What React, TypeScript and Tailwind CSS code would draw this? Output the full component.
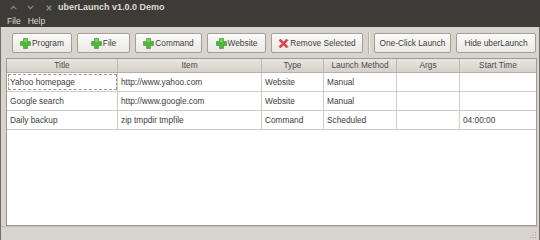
import React from 'react';

const FONT = "font-['Liberation_Sans',Arial,sans-serif]";

const PlusIcon: React.FC = () => (
	<svg width="11" height="11" viewBox="0 0 11 11" className="shrink-0">
		<path d="M3.5 0.5h4v3h3v4h-3v3h-4v-3h-3v-4h3z" fill="#4fb83a" stroke="#3a8f2a" strokeWidth="0.6" />
		<path d="M4.2 1.2h2.6v2.9H4.2z" fill="#8ee07a" opacity="0.7" />
	</svg>
);

const CrossIcon: React.FC = () => (
	<svg width="11" height="11" viewBox="0 0 11 11" className="shrink-0">
		<path
			d="M1 2.5L2.5 1L5.5 4L8.5 1L10 2.5L7 5.5L10 8.5L8.5 10L5.5 7L2.5 10L1 8.5L4 5.5z"
			fill="#e2464a"
			stroke="#b52a2e"
			strokeWidth="0.5"
		/>
	</svg>
);

type ToolButtonProps = { label: string; width: string; icon?: 'plus' | 'cross' };

const ToolButton: React.FC<ToolButtonProps> = ({ label, width, icon }) => (
	<div
		className={`${width} flex h-[20px] items-center justify-center gap-[1px] rounded-[2px] border border-[#a29e96] bg-gradient-to-b from-[#fbfaf9] to-[#ebe9e5] text-[8.3px] text-[#3c3c3c] shadow-[inset_0_1px_0_#ffffff]`}
	>
		{icon === 'plus' && <PlusIcon />}
		{icon === 'cross' && <CrossIcon />}
		<span>{label}</span>
	</div>
);

const COLUMNS = ['Title', 'Item', 'Type', 'Launch Method', 'Args', 'Start Time'];

const ROWS = [
	['Yahoo homepage', 'http://www.yahoo.com', 'Website', 'Manual', '', ''],
	['Google search', 'http://www.google.com', 'Website', 'Manual', '', ''],
	['Daily backup', 'zip tmpdir tmpfile', 'Command', 'Scheduled', '', '04:00:00'],
];

const GRID = 'grid grid-cols-[111px_144px_62px_73px_63px_1fr]';

const App: React.FC = () => {
	return (
		<div className={`flex h-[240px] w-[540px] flex-col overflow-hidden ${FONT}`}>
			{/* title bar */}
			<div className="flex h-[15px] items-center bg-[#3c3b37]">
				<div className="flex w-[58px] items-center">
					<div className="flex w-[19px] justify-center pl-[7px]">
						<svg width="7" height="5" viewBox="0 0 7 5">
							<path d="M0.8 4.2L3.5 1.3L6.2 4.2" fill="none" stroke="#8e8a82" strokeWidth="1.2" />
						</svg>
					</div>
					<div className="flex w-[18px] justify-center pl-[4px]">
						<svg width="7" height="5" viewBox="0 0 7 5">
							<path d="M0.8 0.8L3.5 3.7L6.2 0.8" fill="none" stroke="#8e8a82" strokeWidth="1.2" />
						</svg>
					</div>
					<div className="flex w-[18px] justify-center pl-[5px]">
						<svg width="6" height="6" viewBox="0 0 6 6">
							<path d="M0.8 0.8L5.2 5.2M5.2 0.8L0.8 5.2" fill="none" stroke="#8e8a82" strokeWidth="1.3" />
						</svg>
					</div>
				</div>
				<span className="text-[9px] font-bold text-[#dfdbd2]">uberLaunch v1.0.0 Demo</span>
			</div>

			{/* menu bar */}
			<div className="flex h-[12px] items-center gap-[7px] bg-[#3c3b37] pl-[7px] text-[8.5px] text-[#dfdbd2]">
				<span>File</span>
				<span>Help</span>
			</div>

			{/* main window body */}
			<div className="flex flex-1 flex-col border-x border-[#6f6c66] bg-[#d8d4cd]">
				<div className="flex items-center gap-[5px] pl-[11px] pt-[5px]">
					<ToolButton label="Program" width="w-[60px]" icon="plus" />
					<ToolButton label="File" width="w-[53px]" icon="plus" />
					<ToolButton label="Command" width="w-[67px]" icon="plus" />
					<ToolButton label="Website" width="w-[59px]" icon="plus" />
					<ToolButton label="Remove Selected" width="w-[92px]" icon="cross" />
					<div className="h-[22px] w-[1px] bg-[#b3afa7] shadow-[1px_0_0_#eeece8]" />
					<ToolButton label="One-Click Launch" width="w-[77px]" />
					<ToolButton label="Hide uberLaunch" width="w-[80px]" />
				</div>

				<div className="ml-[5px] mr-[2px] mt-[4px] flex h-[168px] flex-col border border-[#9d9991] bg-white text-[8.3px] text-[#3c3c3c]">
					<div className={`${GRID} h-[14px] border-b border-[#b5b1a9] bg-gradient-to-b from-[#e9e6e1] to-[#d5d1ca] text-[#4a4a4a]`}>
						{COLUMNS.map((col, i) => (
							<div
								key={col}
								className={`flex items-center justify-center ${i < COLUMNS.length - 1 ? 'border-r border-[#bdb9b1]' : ''}`}
							>
								{col}
							</div>
						))}
					</div>
					{ROWS.map((row, r) => (
						<div key={r} className={`${GRID} h-[19px] border-b border-[#cfccc7]`}>
							{row.map((cell, c) => (
								<div
									key={c}
									className={`flex items-center pl-[3px] ${c < row.length - 1 ? 'border-r border-[#cfccc7]' : ''} ${
										r === 0 && c === 0 ? 'outline-1 -outline-offset-2 outline-dashed outline-[#9a9a9a]' : ''
									}`}
								>
									{cell}
								</div>
							))}
						</div>
					))}
				</div>

				{/* status bar */}
				<div className="relative flex-1 border-t border-[#c4c0b8]">
					<svg width="8" height="8" viewBox="0 0 8 8" className="absolute bottom-[1px] right-[2px]">
						{[
							[6, 1],
							[6, 3.5],
							[3.5, 3.5],
							[6, 6],
							[3.5, 6],
							[1, 6],
						].map(([x, y], i) => (
							<rect key={i} x={x} y={y} width="1" height="1" fill="#a8a49c" />
						))}
					</svg>
				</div>
			</div>
		</div>
	);
};

export default App;
